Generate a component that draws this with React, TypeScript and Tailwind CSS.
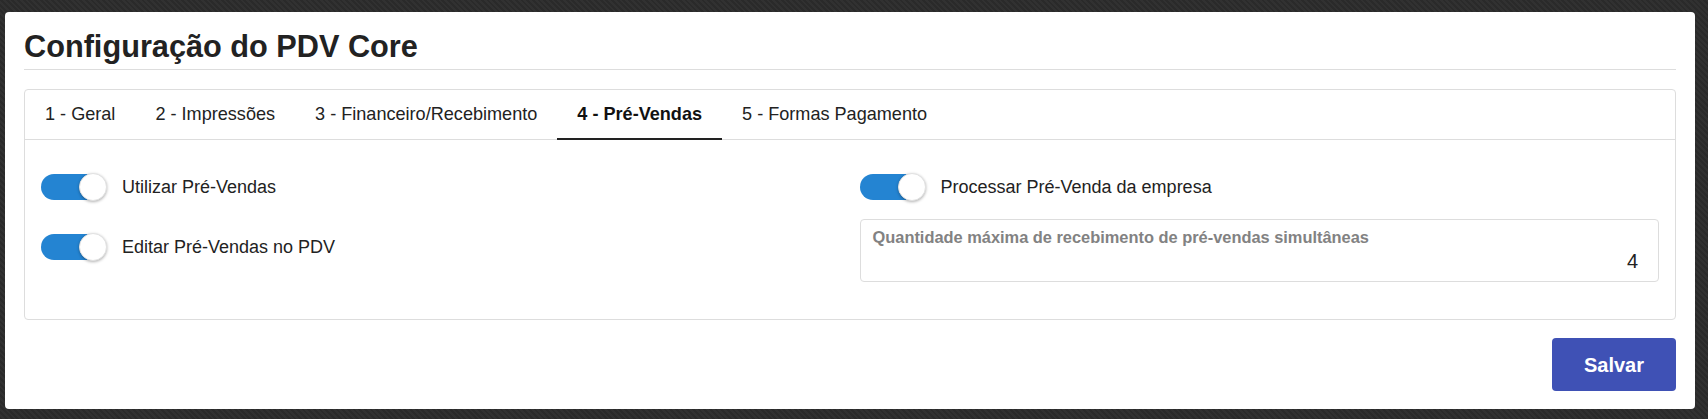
import { useState } from 'react'

type ToggleProps = {
  checked: boolean
  onChange: () => void
  label: string
}

const Toggle = ({ checked, onChange, label }: ToggleProps): JSX.Element => {
  return (
    <label className="flex items-center gap-4 cursor-pointer select-none">
      <button
        type="button"
        onClick={onChange}
        className={`relative w-[65px] h-[26px] rounded-full shrink-0 ${checked ? 'bg-[#2484d2]' : 'bg-[#cfcfcf]'}`}
      >
        <span
          className={`absolute top-[-1px] w-[28px] h-[28px] rounded-full bg-white border border-[#e2e2e2] shadow-[0_1px_3px_rgba(0,0,0,0.3)] ${checked ? 'right-[-1px]' : 'left-[-1px]'}`}
        />
      </button>
      <span className="text-[18px] leading-[22px] text-[#222]">{label}</span>
    </label>
  )
}

const tabs = ['1 - Geral', '2 - Impressões', '3 - Financeiro/Recebimento', '4 - Pré-Vendas', '5 - Formas Pagamento']

const App = (): JSX.Element => {
  const [activeTab, setActiveTab] = useState(3)
  const [utilizar, setUtilizar] = useState(true)
  const [editar, setEditar] = useState(true)
  const [processar, setProcessar] = useState(true)

  return (
    <div className="min-h-[419px] bg-[#2c2c2c] bg-[repeating-linear-gradient(45deg,#2a2a2a_0px,#2a2a2a_2px,#313131_2px,#313131_4px)] pt-3 pl-[5px] pb-[10px] font-['Liberation_Sans',Arial,sans-serif]">
      <div className="w-[1690px] bg-white rounded px-[19px] pt-[17px] pb-[18px]">
        <div className="border-b border-[#dddddd] pb-1">
          <h1 className="text-[30.7px] leading-[36px] font-bold text-[#222]">Configuração do PDV Core</h1>
        </div>

        <div className="mt-[19px] border border-[#dddddd] rounded">
          <div className="flex border-b border-[#dddddd] h-[50px]">
            {tabs.map((tab, index) => (
              <button
                key={tab}
                type="button"
                onClick={() => setActiveTab(index)}
                className={`px-5 h-[50px] pt-px -mb-px text-[18.1px] ${index === activeTab ? 'font-bold text-[#111] border-b-2 border-[#222]' : 'text-[#222] border-b-2 border-transparent'}`}
              >
                {tab}
              </button>
            ))}
          </div>

          <div className="grid grid-cols-2 gap-x-[19px] px-4 pt-[34px] pb-[37px]">
            <div className="flex flex-col gap-[34px]">
              <Toggle checked={utilizar} onChange={() => setUtilizar(!utilizar)} label="Utilizar Pré-Vendas" />
              <Toggle checked={editar} onChange={() => setEditar(!editar)} label="Editar Pré-Vendas no PDV" />
            </div>
            <div className="flex flex-col gap-[19px]">
              <Toggle checked={processar} onChange={() => setProcessar(!processar)} label="Processar Pré-Venda da empresa" />
              <div className="border border-[#dddddd] rounded px-3 pt-2 pb-2">
                <div className="text-[16.4px] leading-[19px] font-bold text-[#828282]">
                  Quantidade máxima de recebimento de pré-vendas simultâneas
                </div>
                <div className="mt-[2px] pr-2 text-right text-[20px] leading-[24px] text-[#222]">4</div>
              </div>
            </div>
          </div>
        </div>

        <div className="flex justify-end mt-[18px]">
          <button
            type="button"
            className="w-[124px] h-[53px] rounded bg-[#3f51b5] text-white text-[20px] font-bold"
          >
            Salvar
          </button>
        </div>
      </div>
    </div>
  )
}

export default App
